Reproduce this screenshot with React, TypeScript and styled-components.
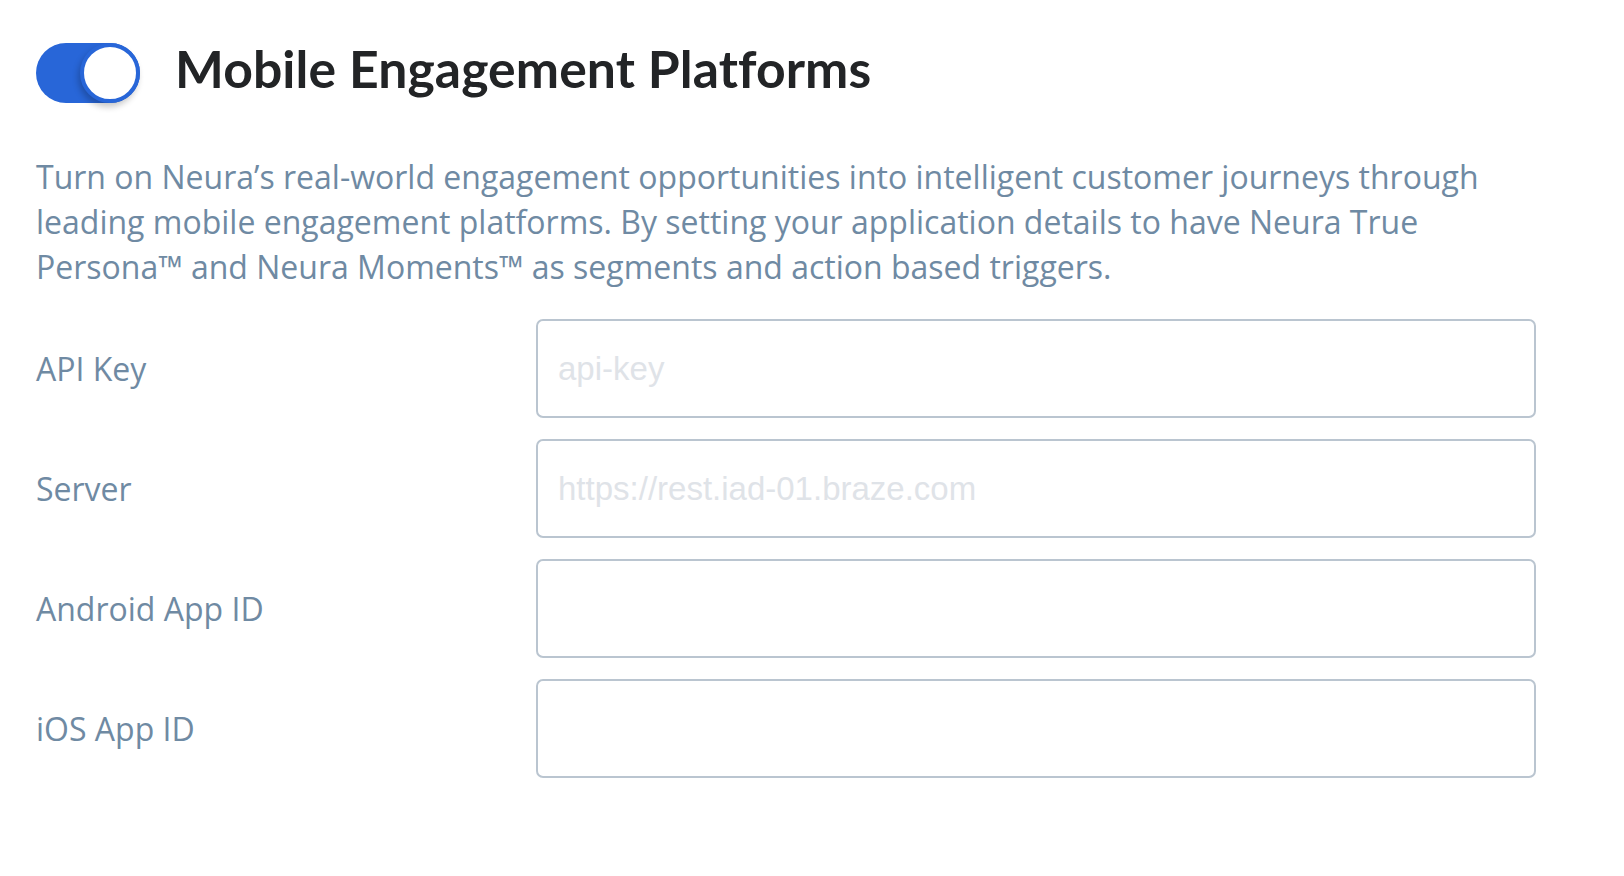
import React, { useState } from "react";
import styled, { createGlobalStyle } from "styled-components";

const GlobalStyle = createGlobalStyle`
  html, body { margin: 0; padding: 0; background: #ffffff; }
  body { font-family: "Open Sans", "Noto Sans", sans-serif; }
  * { box-sizing: border-box; }
`;

const Page = styled.div`
  padding: 43px 0 0 36px;
  width: 1624px;
  height: 876px;
  background: #fff;
`;

const Header = styled.div`
  display: flex;
  align-items: center;
  gap: 35px;
  height: 60px;
`;

const Track = styled.button<{ $on: boolean }>`
  position: relative;
  flex: 0 0 auto;
  width: 104px;
  height: 60px;
  border: none;
  padding: 0;
  border-radius: 30px;
  background: ${(p) => (p.$on ? "#2866d8" : "#c9d2dc")};
  cursor: pointer;
`;

const Knob = styled.span<{ $on: boolean }>`
  position: absolute;
  top: 0;
  left: ${(p) => (p.$on ? "44px" : "0")};
  width: 60px;
  height: 60px;
  border-radius: 50%;
  background: #fff;
  border: 4px solid #2866d8;
  box-shadow: -2px 4px 6px rgba(0, 0, 0, 0.22);
`;

const Title = styled.h1`
  margin: 0 0 10px 0;
  font-family: Lato, "Noto Sans", sans-serif;
  font-weight: 700;
  font-size: 51.7px;
  line-height: 60px;
  color: #222426;
  letter-spacing: 0.1px;
`;

const Description = styled.p`
  margin: 51px 0 0 0;
  width: 1500px;
  font-family: "Open Sans", sans-serif;
  font-size: 32px;
  line-height: 45px;
  color: #6f8aa3;
`;

const Form = styled.div`
  margin-top: 30px;
  display: flex;
  flex-direction: column;
  gap: 21px;
`;

const Row = styled.div`
  display: grid;
  grid-template-columns: 500px 1000px;
  align-items: center;
`;

const Label = styled.label`
  font-family: "Open Sans", sans-serif;
  font-size: 32px;
  color: #6f8aa3;
`;

const Input = styled.input`
  height: 99px;
  width: 1000px;
  border: 2px solid #bac5d0;
  border-radius: 7px;
  padding: 0 20px;
  font-family: "Liberation Sans", Arial, sans-serif;
  font-size: 33px;
  color: #333;
  outline: none;
  &::placeholder {
    color: #dfe3e8;
  }
`;

const fields = [
  { label: "API Key", placeholder: "api-key" },
  { label: "Server", placeholder: "https://rest.iad-01.braze.com" },
  { label: "Android App ID", placeholder: "" },
  { label: "iOS App ID", placeholder: "" },
];

export default function App() {
  const [on, setOn] = useState(true);
  return (
    <Page>
      <GlobalStyle />
      <Header>
        <Track $on={on} onClick={() => setOn(!on)} aria-label="toggle">
          <Knob $on={on} />
        </Track>
        <Title>Mobile Engagement Platforms</Title>
      </Header>
      <Description>
        Turn on Neura’s real-world engagement opportunities into intelligent customer journeys through
        leading mobile engagement platforms. By setting your application details to have Neura True
        Persona™ and Neura Moments™ as segments and action based triggers.
      </Description>
      <Form>
        {fields.map((f) => (
          <Row key={f.label}>
            <Label>{f.label}</Label>
            <Input placeholder={f.placeholder} />
          </Row>
        ))}
      </Form>
    </Page>
  );
}
